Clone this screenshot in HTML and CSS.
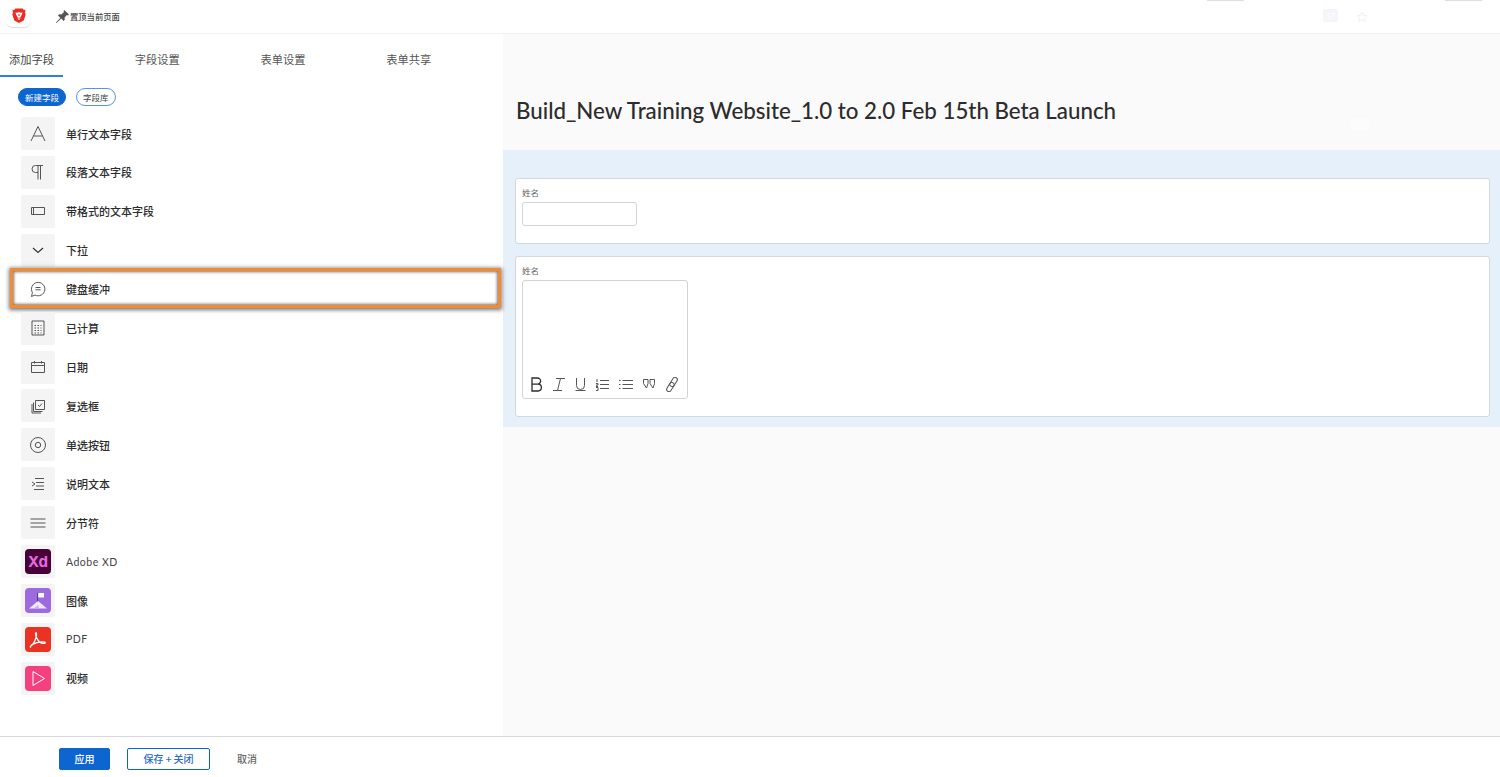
FILE: index.html
```html
<!DOCTYPE html>
<html>
  <head>
    <title>Form Designer</title>
    <meta charset="utf-8">
    <link rel="stylesheet" href="styles.css">
  </head>
  <body>
    <header class="topbar">
      <div class="app-logo">
        <svg width="14" height="15" viewBox="0 0 14 15">
          <path d="M3.4 0.5h7.2l1.2 1.4 1.6-.2-.3 3.4.6 1.4-2 6-4.7 2.4-4.7-2.400-2-6 .6-1.400-.3-3.400 1.600.2z" fill="#ee2a24"/>
          <path d="M3.400 4.600l2 .2 1.600-.8 1.600.8 2-.2-1.400 3.400-1.200 1.700h-2l-1.200-1.700z" fill="#fff"/>
          <path d="M5.200 10.400h3.600l-1.800 1.600z" fill="#fff"/>
          <path d="M5.800 6.200l1.200.5 1.200-.5-.6 1.600h-1.200z" fill="#ee2a24"/>
        </svg>
      </div>
      <div class="pin-page">
        <svg width="13" height="13" viewBox="0 0 13 13">
          <path d="M8.200 0L13 4.600l-1.200.8-.9-.4-2.300 2.600.2 2.200L7.600 11 5.200 8.600.6 13 0 12.400l4.400-4.600L2 5.400l1.200-1.200 2.200.3L8 2l-.5-1z" fill="#555"/>
        </svg>
        <span>置顶当前页面</span>
      </div>
      <div class="ghost-tab ghost-tab-one"></div>
      <div class="ghost-count">37</div>
      <svg class="ghost-star" width="12" height="12" viewBox="0 0 12 12">
        <path d="M6 1l1.500 3.400 3.500.3-2.700 2.300.8 3.500-3.100-1.900-3.100 1.900.8-3.500-2.700-2.300 3.500-.3z" fill="none" stroke="#f1f1f1"/>
      </svg>
      <div class="ghost-tab ghost-tab-two"></div>
    </header>

    <main class="workspace">
      <aside class="sidebar">
        <nav class="tabs">
          <a class="tab tab-active">添加字段</a>
          <a class="tab">字段设置</a>
          <a class="tab">表单设置</a>
          <a class="tab">表单共享</a>
        </nav>

        <div class="pills">
          <span class="pill pill-active">新建字段</span>
          <span class="pill">字段库</span>
        </div>

        <ul class="fields">
          <li class="field">
            <span class="field-icon">
              <svg class="line-icon" width="18" height="18" viewBox="0 0 18 18"><path d="M2 16L9 1.500 16 16M4.500 11h9"/></svg>
            </span>
            <span>单行文本字段</span>
          </li>
          <li class="field">
            <span class="field-icon">
              <svg class="line-icon" width="18" height="18" viewBox="0 0 18 18"><path d="M14 2.500H6.500a3.500 3.500 0 0 0 0 7H9M9 2.500V16.500M11.500 2.500V16.500"/></svg>
            </span>
            <span>段落文本字段</span>
          </li>
          <li class="field">
            <span class="field-icon">
              <svg class="line-icon" width="18" height="18" viewBox="0 0 18 18"><path d="M2.500 5.500h13v7h-13zM4.500 5.500v7"/></svg>
            </span>
            <span>带格式的文本字段</span>
          </li>
          <li class="field">
            <span class="field-icon">
              <svg class="line-icon dark-icon" width="18" height="18" viewBox="0 0 18 18"><path d="M4 7l5 4.500L14 7"/></svg>
            </span>
            <span>下拉</span>
          </li>
          <li class="field field-marked">
            <span class="field-icon">
              <svg class="line-icon" width="18" height="18" viewBox="0 0 18 18"><path d="M2.500 16.500l.9-4A6.700 6.700 0 1 1 6 15zM6.500 7.500h5M6.500 9.800h5"/></svg>
            </span>
            <span>键盘缓冲</span>
            <span class="marker"></span>
          </li>
          <li class="field">
            <span class="field-icon">
              <svg class="line-icon" width="18" height="18" viewBox="0 0 18 18">
                <path d="M3 2h12v14H3z"/>
                <path class="dots" d="M5.500 6.500h7M5.500 9h7M5.500 11.500h7M5.500 14h7"/>
              </svg>
            </span>
            <span>已计算</span>
          </li>
          <li class="field">
            <span class="field-icon">
              <svg class="line-icon" width="18" height="18" viewBox="0 0 18 18"><path d="M2.500 4.500h13v10h-13zM2.500 7.500h13M5.500 3v2.500M12.500 3v2.500"/></svg>
            </span>
            <span>日期</span>
          </li>
          <li class="field">
            <span class="field-icon">
              <svg class="line-icon" width="18" height="18" viewBox="0 0 18 18"><path d="M6.500 3.500h9v9h-9zM4.500 5.500v9h9M3 7v9h9M9 8l1.500 1.500 2.500-3"/></svg>
            </span>
            <span>复选框</span>
          </li>
          <li class="field">
            <span class="field-icon">
              <svg class="line-icon" width="18" height="18" viewBox="0 0 18 18"><circle cx="9" cy="9" r="7.500"/><circle cx="9" cy="9" r="2.700"/></svg>
            </span>
            <span>单选按钮</span>
          </li>
          <li class="field">
            <span class="field-icon">
              <svg class="line-icon" width="18" height="18" viewBox="0 0 18 18"><path d="M6 3.500h9M7 7.500h8M7 11h8M5 14.500h10M3 7l3 2-3 2"/></svg>
            </span>
            <span>说明文本</span>
          </li>
          <li class="field">
            <span class="field-icon">
              <svg class="line-icon" width="18" height="18" viewBox="0 0 18 18"><path d="M1.500 5h15M1.500 9h15M1.500 13h15"/></svg>
            </span>
            <span>分节符</span>
          </li>
          <li class="field">
            <span class="field-icon">
              <span class="app-tile tile-xd">Xd</span>
            </span>
            <span class="field-latin">Adobe XD</span>
          </li>
          <li class="field">
            <span class="field-icon">
              <span class="app-tile tile-image">
                <svg width="26" height="25" viewBox="0 0 26 25">
                  <path d="M12 5h1.200v9H12z" fill="#5b3a9c"/>
                  <path d="M13.200 5H19v4.500h-5.800z" fill="#fff"/>
                  <path d="M4 20.500l9-7.500 9 7.500z" fill="#fff" opacity="0.85"/>
                  <path d="M9 20.500l4-3.500 1 3.500z" fill="#c9aee9"/>
                </svg>
              </span>
            </span>
            <span>图像</span>
          </li>
          <li class="field">
            <span class="field-icon">
              <span class="app-tile tile-pdf">
                <svg width="26" height="25" viewBox="0 0 26 25">
                  <path d="M5.500 19.500c2.500-1 5.500-7 6-11.500.2-1.500-.2-2.500-.7-2.200-.8.500 0 4 2 7 1.800 2.600 4.500 3.800 6.700 3.600 1.300-.2.900-1.400-.5-1.500-3-.3-8.500.6-11.500 2.500-1.300.9-2.600 2.700-2 2.600z" fill="none" stroke="#fff" stroke-width="1.300"/>
                </svg>
              </span>
            </span>
            <span class="field-latin">PDF</span>
          </li>
          <li class="field">
            <span class="field-icon">
              <span class="app-tile tile-video">
                <svg width="26" height="25" viewBox="0 0 26 25">
                  <path d="M8 5.500l11.500 7-11.500 7z" fill="none" stroke="#fff" stroke-width="1"/>
                </svg>
              </span>
            </span>
            <span>视频</span>
          </li>
        </ul>
      </aside>

      <section class="preview">
        <div class="form-head">
          <h1>Build_New Training Website_1.0 to 2.0 Feb 15th Beta Launch</h1>
          <span class="ghost-dot"></span>
        </div>

        <div class="form-body">
          <div class="card card-short">
            <label class="card-label">姓名</label>
            <div class="text-input"></div>
          </div>
          <div class="card card-tall">
            <label class="card-label">姓名</label>
            <div class="editor">
              <div class="editor-tools">
                <svg class="tool" width="12" height="15" viewBox="0 0 12 15"><path d="M1 1v13h6a3.400 3.400 0 0 0 0-6.800H1h5.500a3.100 3.100 0 0 0 0-6.200z" fill="none" stroke="#2c2c2c" stroke-width="1.300"/></svg>
                <svg class="tool" width="12" height="15" viewBox="0 0 12 15"><path d="M3 1.500h9M7.500 1.500L4.500 13.500M0 13.500h9"/></svg>
                <svg class="tool" width="11" height="15" viewBox="0 0 11 15"><path d="M1.500 1v7.500a4 4 0 0 0 8 0V1M.5 13.500h10"/></svg>
                <svg class="tool" width="13" height="15" viewBox="0 0 13 15"><path d="M4 3.500h9M4 7.500h9M4 11.500h9M1 2v3M0 6.500h2v1.500H0v1.500h2M0 10.500h2v3H0"/></svg>
                <svg class="tool" width="14" height="15" viewBox="0 0 14 15"><path d="M3.500 3.500H14M3.500 7.500H14M3.500 11.500H14M0 3.500h1.500M0 7.500h1.500M0 11.500h1.500"/></svg>
                <svg class="tool" width="12" height="15" viewBox="0 0 12 15"><path d="M.5 2.500h4.500v4L3.500 11 .5 6.500zM7 2.500h4.500v4L10 11 7 6.500z"/></svg>
                <svg class="tool" width="14" height="15" viewBox="0 0 14 15">
                  <g transform="rotate(-58 7 7.500)">
                    <rect x="-1" y="5.200" width="10" height="4.600" rx="2.300"/>
                    <rect x="5" y="5.200" width="10" height="4.600" rx="2.300"/>
                  </g>
                </svg>
              </div>
            </div>
          </div>
        </div>
      </section>
    </main>

    <footer class="bottombar">
      <button class="btn btn-primary">应用</button>
      <button class="btn btn-outline">保存 + 关闭</button>
      <button class="btn btn-text">取消</button>
    </footer>
  </body>
</html>
```

FILE: styles.css
```css
html, body {
    height: 100%;
}

body {
    margin: 0;
    display: flex;
    flex-direction: column;
    overflow: hidden;

    font-family: "Noto Sans CJK SC", "Noto Sans", sans-serif;
    color: #2c2c2c;
    background: #fff;
}

/* top bar */

.topbar {
    position: relative;
    flex: none;
    height: 33px;
    display: flex;
    align-items: flex-start;

    border-bottom: 1px solid #f0f0f0;
}

.app-logo {
    width: 23px;
    height: 27px;
    margin-left: 7px;

    display: flex;
    justify-content: center;
    padding-top: 8px;
    box-sizing: border-box;

    border-radius: 0 0 5px 5px;
    box-shadow: 0 1px 1px rgba(0, 0, 0, .14);
}

.pin-page {
    margin-left: 26px;
    height: 32px;
    display: flex;
    align-items: center;
    gap: 1px;

    font-size: 8.3px;
    font-weight: 500;
    color: #444;
}

.ghost-tab {
    position: absolute;
    top: -2px;
    width: 37px;
    height: 2px;
    background: #fff;
    box-shadow: 0 1px 1px rgba(0, 0, 0, .14);
}

.ghost-tab-one {
    left: 1207px;
}

.ghost-tab-two {
    left: 1445px;
}

.ghost-count {
    position: absolute;
    top: 9px;
    left: 1323px;
    width: 15px;
    height: 13px;

    border-radius: 2px;

    font-size: 8px;
    line-height: 13px;
    text-align: center;
    color: #fff;

    background: #f5f6fb;
}

.ghost-star {
    position: absolute;
    top: 11px;
    left: 1356px;
}

/* workspace */

.workspace {
    flex: 1;
    min-height: 0;
    display: flex;
}

.sidebar {
    flex: none;
    width: 503px;
}

.tabs {
    height: 43px;
    display: flex;
}

.tab {
    position: relative;
    width: 126px;
    padding: 0 9px;
    box-sizing: border-box;

    font-size: 11.25px;
    line-height: 51px;
    color: #555;
}

.tab-active {
    color: #444;
}

.tab-active::after {
    content: "";
    position: absolute;
    left: 0;
    bottom: 0;
    width: 63px;
    height: 2px;
    background: #2f7fe0;
}

.pills {
    display: flex;
    gap: 10px;
    padding: 11px 0 0 18px;
}

.pill {
    height: 18px;
    padding: 0 6px;
    box-sizing: border-box;

    border: 1px solid #5a93df;
    border-radius: 9px;

    font-size: 8.5px;
    line-height: 16px;
    color: #444;
}

.pill-active {
    color: #fff;
    background: #0d66d0;
    border-color: #0d66d0;
}

.fields {
    margin: 11px 0 0 21px;
    padding: 0;
    list-style: none;
}

.field {
    position: relative;
    height: 33px;
    margin-bottom: 5.93px;
    display: flex;
    align-items: center;
    gap: 11px;

    font-size: 11px;
    font-weight: 500;
    color: #2c2c2c;
}

.field-latin {
    font-family: Lato, sans-serif;
    font-size: 10.5px;
    font-weight: 400;
    letter-spacing: .5px;
    color: #444;
}

.field-icon {
    flex: none;
    width: 34px;
    height: 33px;
    display: flex;
    justify-content: center;
    align-items: center;

    border-radius: 2px;
    background: #f4f4f4;
}

.line-icon {
    fill: none;
    stroke: #555;
    stroke-width: 1;
}

.dark-icon {
    stroke: #333;
    stroke-width: 1.2;
}

.dots {
    stroke-dasharray: 1.5 1.5;
}

.field-marked .field-icon {
    background: #fff;
}

.marker {
    position: absolute;
    top: -5px;
    left: -11px;
    width: 491px;
    height: 40px;
    box-sizing: border-box;

    border: 3px solid #f58a33;
    box-shadow: 0 1px 4px 1px rgba(60, 60, 60, .7), inset 0 0 3px 1px rgba(60, 60, 60, .7);
}

.app-tile {
    width: 26px;
    height: 25px;
    display: flex;
    justify-content: center;
    align-items: center;

    border-radius: 4px;
}

.tile-xd {
    font-family: Inter, sans-serif;
    font-size: 15px;
    font-weight: 700;
    color: #e56be0;
    background: #470137;
}

.tile-image {
    background: #9e6bde;
}

.tile-pdf {
    background: #eb3323;
}

.tile-video {
    background: #f5407f;
}

/* form preview */

.preview {
    flex: 1;
    min-width: 0;
    background: #fafafa;
}

.form-head {
    position: relative;
    height: 116px;
    padding: 36px 13px 0;
    box-sizing: border-box;
    display: flex;
    align-items: center;
}

h1 {
    margin: 0;
    font-family: Lato, sans-serif;
    font-size: 22.3px;
    font-weight: 500;
    color: #2c2c2c;
}

.ghost-dot {
    position: absolute;
    top: 84px;
    left: 847px;
    width: 20px;
    height: 13px;
    border-radius: 7px;
    background: #fcfcfc;
}

.form-body {
    height: 277px;
    padding: 28px 10px 10px 12px;
    box-sizing: border-box;
    display: flex;
    flex-direction: column;
    gap: 12px;

    background: #e5f0fb;
}

.card {
    padding: 7px 6px;
    box-sizing: border-box;

    border: 1px solid #d3d8dd;
    border-radius: 3px;

    background: #fff;
}

.card-short {
    height: 66px;
}

.card-tall {
    height: 161px;
}

.card-label {
    display: block;
    height: 16px;

    font-size: 8.5px;
    line-height: 12px;
    color: #666;
}

.text-input {
    width: 115px;
    height: 24px;
    box-sizing: border-box;

    border: 1px solid #d3d3d3;
    border-radius: 3px;
}

.editor {
    width: 166px;
    height: 119px;
    box-sizing: border-box;
    padding: 0 8px 6px 8px;
    display: flex;
    align-items: flex-end;

    border: 1px solid #d3d3d3;
    border-radius: 3px;
}

.editor-tools {
    display: flex;
    gap: 10px;
}

.tool {
    fill: none;
    stroke: #555;
    stroke-width: 1;
}

/* bottom bar */

.bottombar {
    flex: none;
    height: 41px;
    padding: 11px 0 0 59px;
    box-sizing: border-box;
    display: flex;
    align-items: flex-start;
    gap: 17px;

    border-top: 1px solid #d8d8d8;
    background: #fff;
}

.btn {
    height: 22px;
    padding: 0 0 2px;
    box-sizing: border-box;

    border: 1px solid #0d66d0;
    border-radius: 2px;

    font-family: "Noto Sans CJK SC", sans-serif;
    font-size: 10px;
    font-weight: 500;
}

.btn-primary {
    width: 51px;
    color: #fff;
    background: #0d66d0;
}

.btn-outline {
    width: 83px;
    color: #2a6bc4;
    background: #fff;
}

.btn-text {
    margin-left: 10px;
    border: 0;
    color: #666;
    background: none;
}
```
